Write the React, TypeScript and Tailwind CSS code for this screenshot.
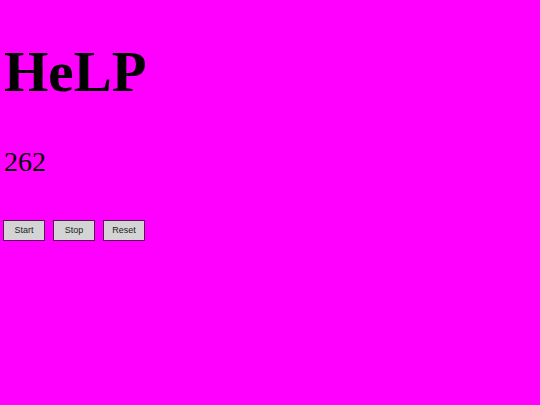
export default function App() {
  return (
    <div className="min-h-[405px] w-full bg-[#ff00ff] pl-[3px] flex flex-col items-start text-black">
      <h1 className="mt-[43px] ml-[1px] text-[57px] leading-none font-bold font-['Liberation_Serif',serif]">HeLP</h1>
      <div className="mt-[48px] ml-[1px] text-[28px] leading-none font-['Liberation_Serif',serif]">262</div>
      <div className="mt-[44px] flex gap-[8px] font-['Liberation_Sans',sans-serif]">
        <button className="w-[42px] h-[21px] bg-[#d4d4d4] border border-[#5a105a] text-[9px] leading-none text-[#1a1a1a]">Start</button>
        <button className="w-[42px] h-[21px] bg-[#d4d4d4] border border-[#5a105a] text-[9px] leading-none text-[#1a1a1a]">Stop</button>
        <button className="w-[42px] h-[21px] bg-[#d4d4d4] border border-[#5a105a] text-[9px] leading-none text-[#1a1a1a]">Reset</button>
      </div>
    </div>
  );
}
